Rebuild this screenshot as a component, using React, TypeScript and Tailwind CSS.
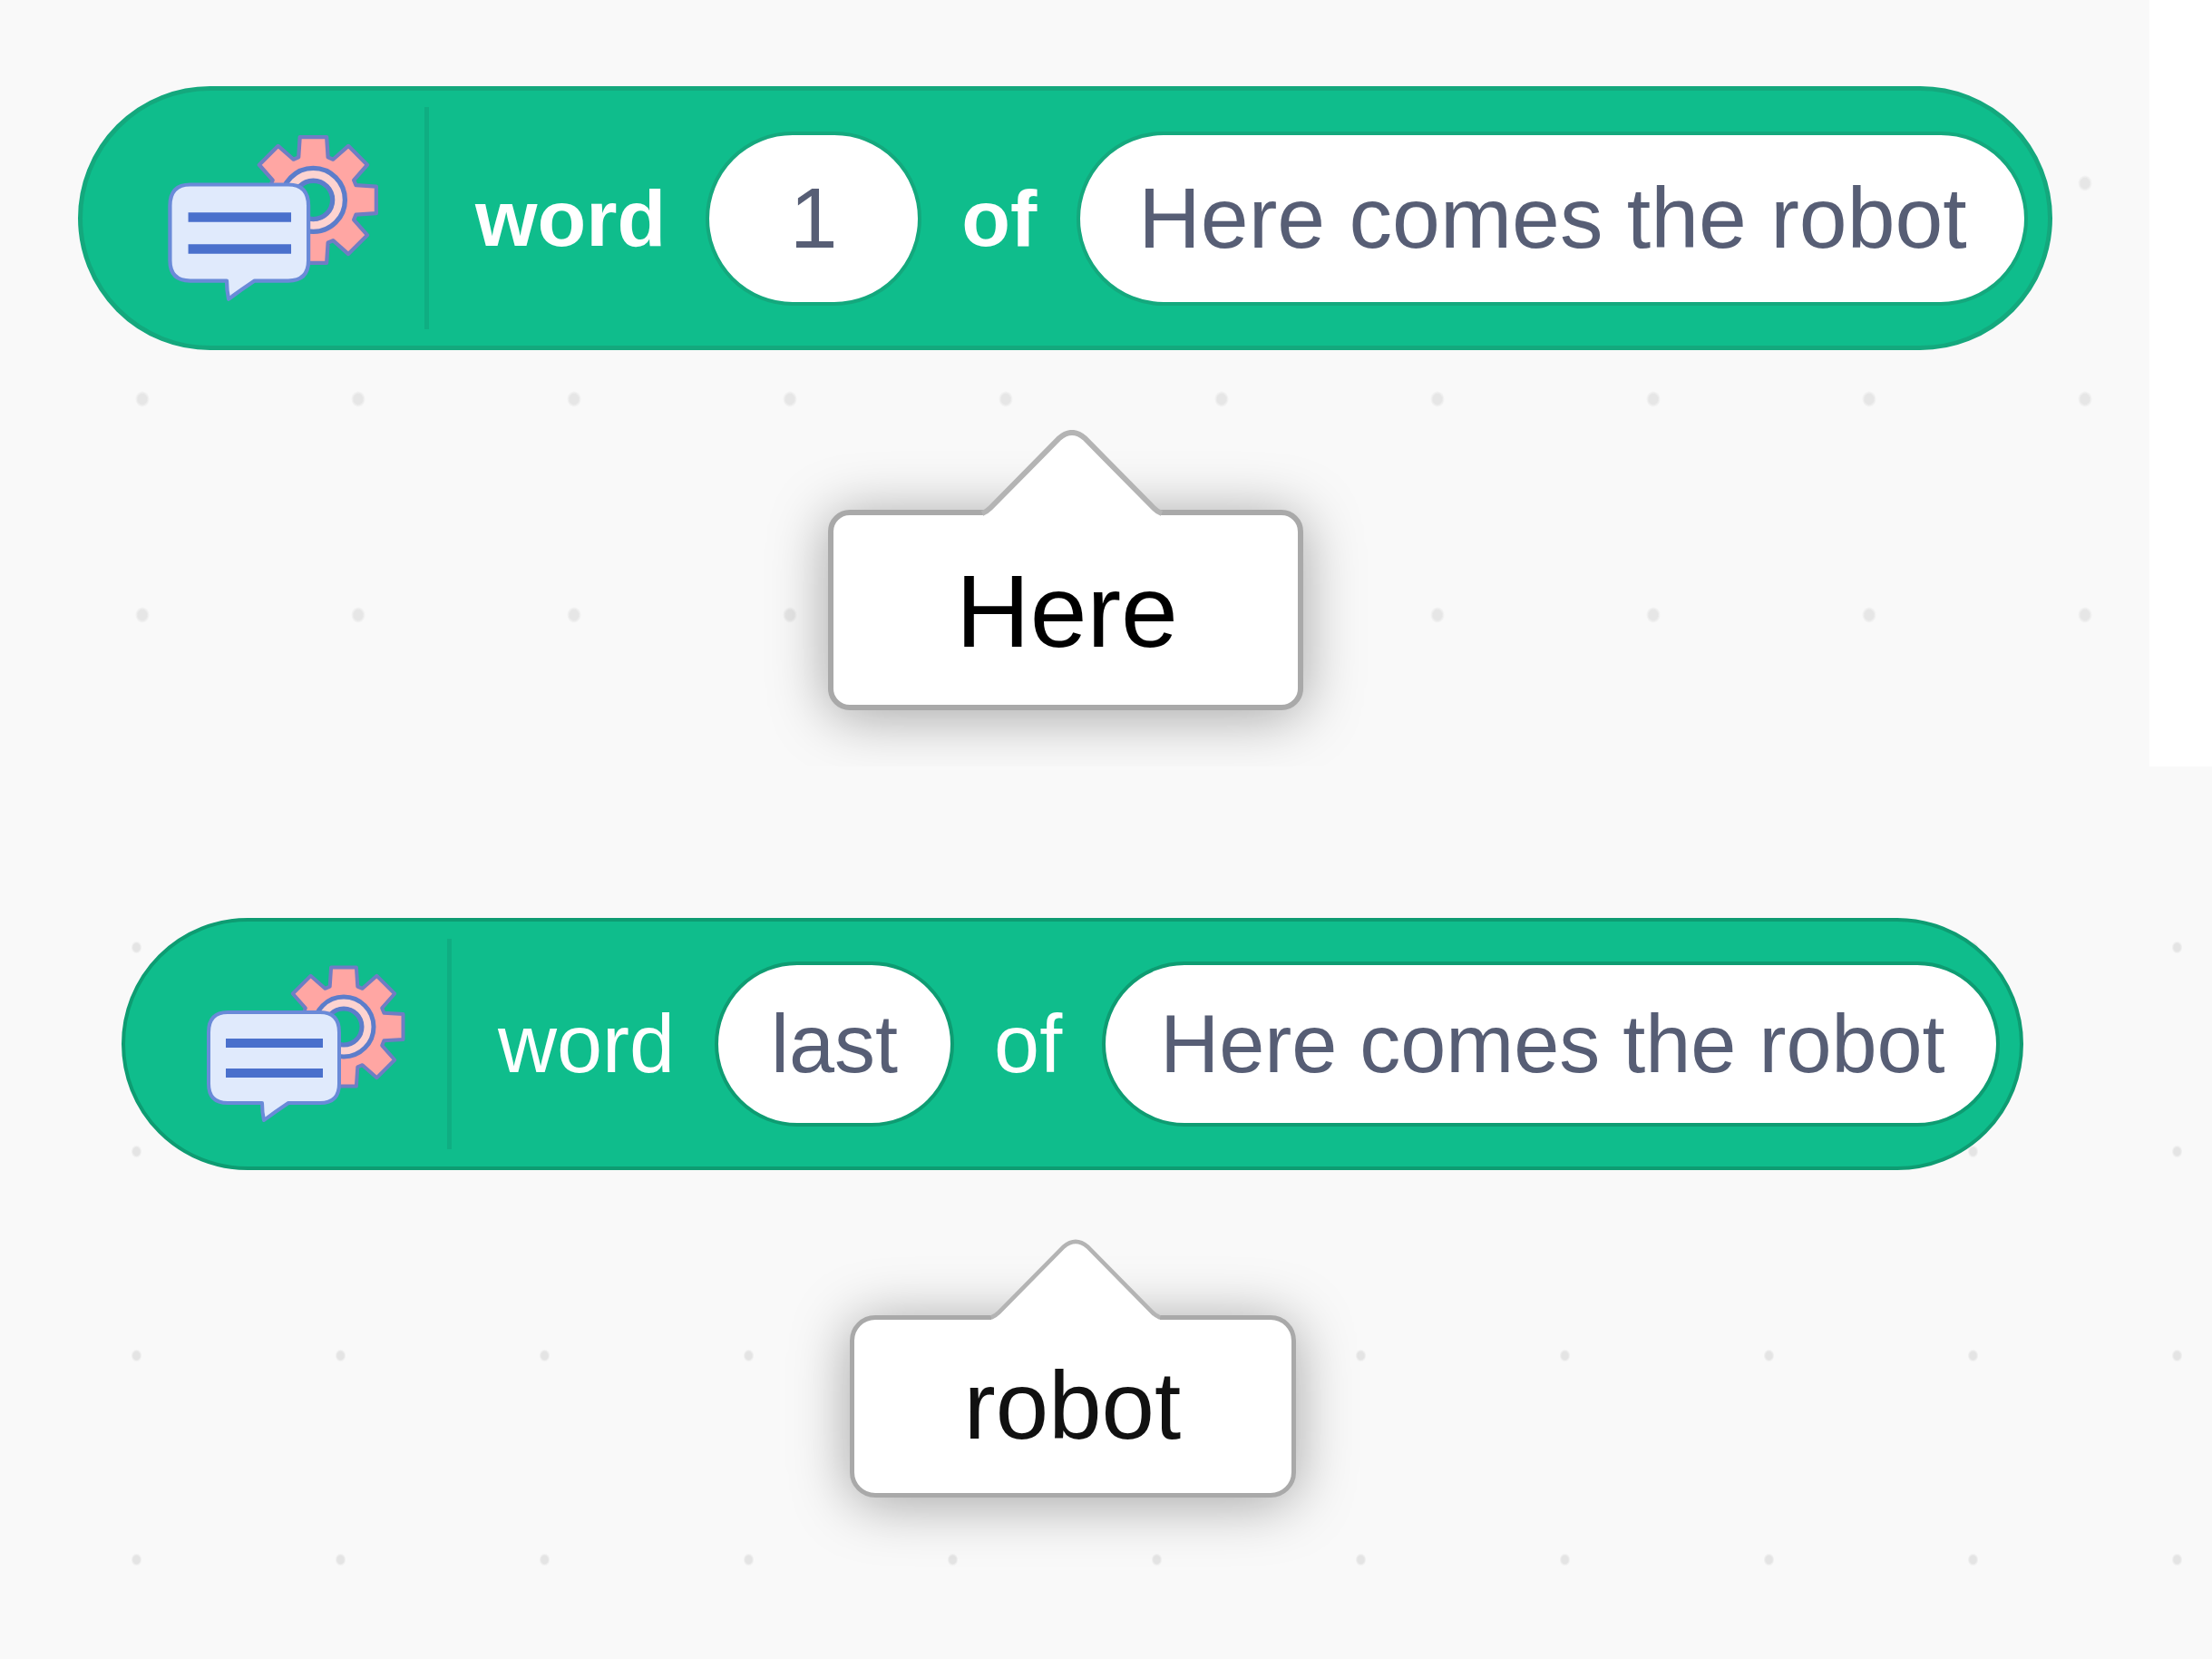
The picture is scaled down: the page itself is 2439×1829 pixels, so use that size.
import React from "react";

/** Chat bubble in front of a gear: the extension's block icon. */
function ExtensionIcon({ className }: { className: string }) {
  const point = (radius: number, degrees: number) => {
    const a = (degrees * Math.PI) / 180;
    return `${(156 + radius * Math.cos(a)).toFixed(1)} ${(74 + radius * Math.sin(a)).toFixed(1)}`;
  };
  const teeth = [0, 45, 90, 135, 180, 225, 270, 315];
  const gear =
    "M" +
    teeth
      .flatMap((t) => [point(47, t - 19), point(67, t - 12), point(67, t + 12), point(47, t + 19)])
      .join("L") +
    "Z";
  return (
    <svg viewBox="0 0 232 186" className={className} aria-hidden="true">
      <path
        d={`${gear}M136 74a20 20 0 1 0 40 0a20 20 0 1 0 -40 0Z`}
        fill="#ffa6a3"
        fillRule="evenodd"
        stroke="#6f7dc4"
        strokeWidth="4"
        strokeLinejoin="round"
      />
      <circle cx="156" cy="74" r="27" fill="none" stroke="#fdd3d0" strokeWidth="10" />
      <circle cx="156" cy="74" r="33" fill="none" stroke="#5c7dcb" strokeWidth="5" />
      <circle cx="156" cy="74" r="20" fill="none" stroke="#5c7dcb" strokeWidth="5" />
      <path
        d="M28 58H130Q151 58 151 80V137Q151 158 130 158H95Q80 168 68 177Q66 168 66 158H28Q7 158 7 137V80Q7 58 28 58Z"
        fill="#e0eafc"
        stroke="#6a8ad8"
        strokeWidth="4"
        strokeLinejoin="round"
      />
      <path d="M26 92H133M26 125H133" stroke="#4a70cc" strokeWidth="10" />
    </svg>
  );
}

function Pointer({ className, strokeWidth }: { className: string; strokeWidth: number }) {
  return (
    <svg viewBox="0 0 200 96" className={className} aria-hidden="true">
      <path d="M0 96L4 91L84 10Q100 -4 116 10L196 91L200 96Z" fill="#ffffff" />
      <path
        d="M1 92Q6 90 10 86L86 9Q100 -3 114 9L190 86Q194 90 199 92"
        fill="none"
        stroke="#b4b4b4"
        strokeWidth={strokeWidth}
      />
    </svg>
  );
}

export default function App() {
  return (
    <main className="flex min-h-screen flex-col bg-[#f9f9f9] font-['Liberation_Sans',Arial,sans-serif]">
      <div className="bg-white pr-[69px]">
        <section className="flex flex-col items-center overflow-hidden bg-[#f9f9f9] bg-[radial-gradient(ellipse_8px_9px,#e6e6e6_60%,transparent)] bg-[size:238px_238px] bg-[position:38px_83px] pt-[95px] pr-[107px] pb-[62px] pl-[86px]">
          <div className="flex w-full items-center rounded-full border-[5px] border-[#14a87d] bg-[#0fbd8c] py-[18px] pr-[22px] pl-[89px]">
            <ExtensionIcon className="w-[246px] shrink-0" />
            <div className="mr-[51px] ml-[42px] h-[245px] w-[5px] shrink-0 bg-[#0fae82]" />
            <div className="flex min-w-0 flex-1 items-center gap-11">
              <label htmlFor="index-1" className="text-[88px] leading-none font-bold text-white">
                word
              </label>
              <input
                id="index-1"
                defaultValue="1"
                className="h-[192px] w-[238px] rounded-full border-[4px] border-[#14a87d] bg-white text-center text-[95px] text-[#575e75] outline-none"
              />
              <label htmlFor="text-1" className="text-[88px] leading-none font-bold text-white">
                of
              </label>
              <input
                id="text-1"
                defaultValue="Here comes the robot"
                className="h-[192px] min-w-0 flex-1 rounded-full border-[4px] border-[#14a87d] bg-white pl-16 text-[95px] text-[#575e75] outline-none"
              />
            </div>
          </div>
          <output className="relative mt-[176px] block w-[524px] rounded-[24px] border-[6px] border-[#a9a9a9] bg-white pt-[50px] pb-[46px] pl-1 text-center text-[113px] leading-none text-black shadow-[0_6px_64px_rgba(0,0,0,0.35)]">
            <Pointer className="absolute -top-[94px] left-[163px] w-[200px]" strokeWidth={6} />
            Here
          </output>
        </section>
      </div>

      <section className="flex flex-1 flex-col items-center bg-[radial-gradient(ellipse_6px_7px,#e4e4e4_60%,transparent)] bg-[size:225px_225px] bg-[position:38px_87px] pt-[167px] pr-[208px] pl-[134px]">
        <div className="flex w-full items-center rounded-full border-[4px] border-[#0e9c72] bg-[#0fbd8c] py-[19px] pr-[22px] pl-[85px]">
          <ExtensionIcon className="w-[232px] shrink-0" />
          <div className="mr-[51px] ml-[38px] h-[232px] w-[5px] shrink-0 bg-[#0fae82]" />
          <div className="flex min-w-0 flex-1 items-center gap-11">
            <label htmlFor="index-2" className="text-[90px] leading-none text-white">
              word
            </label>
            <input
              id="index-2"
              defaultValue="last"
              className="h-[182px] w-[264px] rounded-full border-[4px] border-[#0e9c72] bg-white text-center text-[90px] text-[#575e75] outline-none"
            />
            <label htmlFor="text-2" className="text-[90px] leading-none text-white">
              of
            </label>
            <input
              id="text-2"
              defaultValue="Here comes the robot"
              className="h-[182px] min-w-0 flex-1 rounded-full border-[4px] border-[#0e9c72] bg-white pl-[60px] text-[90px] text-[#575e75] outline-none"
            />
          </div>
        </div>
        <output className="relative mt-[160px] block w-[492px] rounded-[28px] border-[5px] border-[#a9a9a9] bg-white pt-[42px] pb-[44px] text-center text-[105px] leading-none text-[#111111] shadow-[0_6px_64px_rgba(0,0,0,0.35)]">
          <Pointer className="absolute -top-[89px] left-[150px] w-[188px]" strokeWidth={5} />
          robot
        </output>
      </section>
    </main>
  );
}
